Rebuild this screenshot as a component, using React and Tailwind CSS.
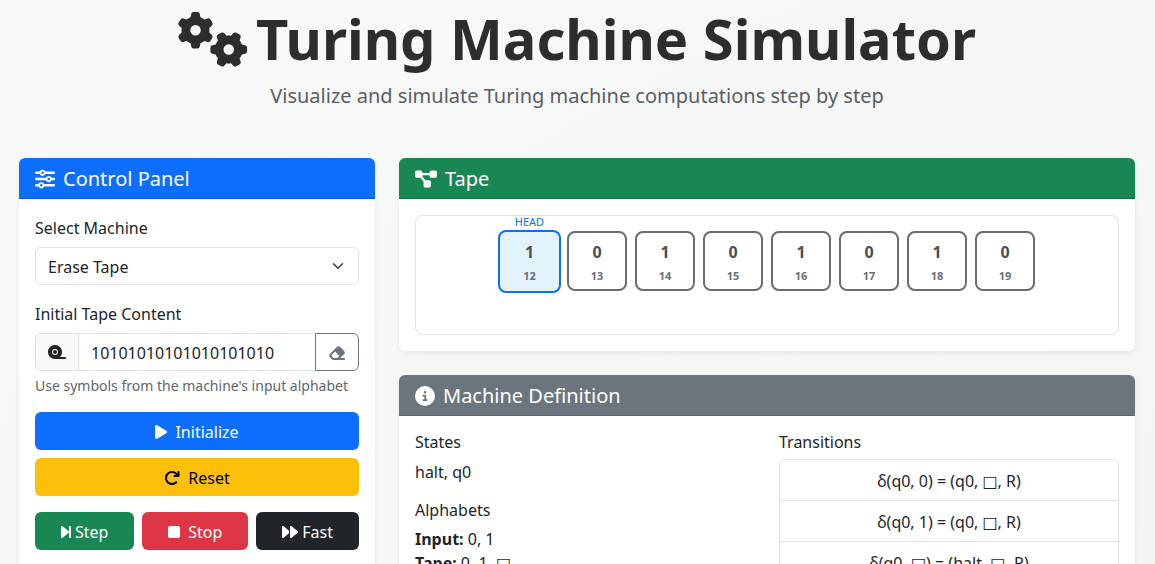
import { useState } from "react";
import {
  FaGears,
  FaSliders,
  FaTape,
  FaEraser,
  FaPlay,
  FaArrowRotateRight,
  FaForwardStep,
  FaStop,
  FaForward,
  FaDiagramProject,
  FaCircleInfo,
} from "react-icons/fa6";

const HEAD_POSITION = 12;

const CELLS = [
  { index: 12, symbol: "1" },
  { index: 13, symbol: "0" },
  { index: 14, symbol: "1" },
  { index: 15, symbol: "0" },
  { index: 16, symbol: "1" },
  { index: 17, symbol: "0" },
  { index: 18, symbol: "1" },
  { index: 19, symbol: "0" },
];

const TRANSITIONS = [
  "δ(q0, 0) = (q0, □, R)",
  "δ(q0, 1) = (q0, □, R)",
  "δ(q0, □) = (halt, □, R)",
];

function Card({ icon, title, headerClass, children }) {
  return (
    <section className="rounded-md bg-white shadow-[0_2px_4px_rgba(0,0,0,0.075)]">
      <h2
        className={`flex items-center gap-2 rounded-t-md border-b border-black/15 px-4 pt-[9px] pb-[7px] text-xl leading-6 text-white ${headerClass}`}
      >
        {icon}
        {title}
      </h2>
      <div className="p-4">{children}</div>
    </section>
  );
}

function Button({ className, children }) {
  return (
    <button
      type="button"
      className={`flex items-center justify-center rounded-md px-3 pt-2 pb-1.5 leading-6 ${className}`}
    >
      {children}
    </button>
  );
}

function TapeCell({ symbol, index, active }) {
  return (
    <div
      className={`relative flex shrink-0 flex-col items-center justify-center rounded-lg border-2 font-bold ${
        active
          ? "-mt-px -mr-0.5 -ml-px size-[63px] border-[#0d6efd] bg-[#e3f3fc]"
          : "size-15 border-[#6c6c6c] bg-white pt-0.5"
      }`}
    >
      {active && (
        <span className="absolute -top-[18px] text-[11px] leading-4 font-normal text-[#0d6efd]">
          HEAD
        </span>
      )}
      <span className="leading-6 text-[#4c5054]">{symbol}</span>
      <span className="pt-1 text-[11px] leading-4 text-[#6c6f72]">{index}</span>
    </div>
  );
}

function ControlPanel() {
  const [machine, setMachine] = useState("erase");
  const [input, setInput] = useState("10101010101010101010");

  return (
    <Card
      title="Control Panel"
      headerClass="bg-[#0d6efd]"
      icon={<FaSliders className="size-5" />}
    >
      <label htmlFor="machine" className="mb-1.5 block leading-[26px]">
        Select Machine
      </label>
      <div className="relative mb-4">
        <select
          id="machine"
          value={machine}
          onChange={(e) => setMachine(e.target.value)}
          className="block h-[38px] w-full appearance-none rounded-md border border-[#dee2e6] bg-white pt-0.5 pr-9 pl-3"
        >
          <option value="erase">Erase Tape</option>
        </select>
        <svg
          viewBox="0 0 16 16"
          className="pointer-events-none absolute top-[13px] right-[15px] size-3 fill-none stroke-[#343a40] stroke-2"
          strokeLinecap="round"
          strokeLinejoin="round"
        >
          <path d="m2 5 6 6 6-6" />
        </svg>
      </div>

      <label htmlFor="tape" className="mb-1.5 block leading-[26px]">
        Initial Tape Content
      </label>
      <div className="flex h-[38px]">
        <span className="flex items-center rounded-l-md border border-[#dee2e6] bg-[#f8f9fa] px-3">
          <FaTape className="h-4 w-[18px]" />
        </span>
        <input
          id="tape"
          type="text"
          value={input}
          onChange={(e) => setInput(e.target.value)}
          className="w-0 min-w-0 grow border-y border-[#dee2e6] bg-white px-3 pt-0.5"
        />
        <button
          type="button"
          aria-label="Clear"
          onClick={() => setInput("")}
          className="flex items-center rounded-r-md border border-[#6c757d] px-3 pt-0.5 text-[#6c757d]"
        >
          <FaEraser className="h-4 w-[18px]" />
        </button>
      </div>
      <p className="mt-1 mb-4 text-sm leading-[21px] text-[#5f666c]">
        Use symbols from the machine's input alphabet
      </p>

      <div className="mb-4 grid gap-2">
        <Button className="gap-2 bg-[#0d6efd] text-white">
          <FaPlay className="h-4 w-3" />
          Initialize
        </Button>
        <Button className="gap-2 bg-[#fdc00a] text-black">
          <FaArrowRotateRight className="size-4" />
          Reset
        </Button>
      </div>
      <div className="mb-4 flex gap-2">
        <Button className="grow gap-1 bg-[#198754] text-white">
          <FaForwardStep className="h-4 w-2.5" />
          Step
        </Button>
        <Button className="grow gap-2 bg-[#dc3545] text-white">
          <FaStop className="h-4 w-3" />
          Stop
        </Button>
        <Button className="grow gap-1 bg-[#212529] text-white">
          <FaForward className="size-4" />
          Fast
        </Button>
      </div>
    </Card>
  );
}

export default function App() {
  return (
    <main className="min-h-screen bg-linear-to-br from-[#f8f9f9] to-[#f3f5f4] pt-[5px] pr-px pb-6 font-['Noto_Sans','DejaVu_Sans',sans-serif] text-base leading-6 text-[#212529]">
      <div className="mx-auto max-w-[1140px] px-3">
        <header className="mb-[46px] text-center">
          <h1 className="mb-2 flex items-center justify-center gap-2 text-[56px] leading-[67px] font-bold text-[#2d2d2d]">
            <FaGears className="h-14 w-[70px]" />
            Turing Machine Simulator
          </h1>
          <p className="text-xl leading-8 text-[#5a5e62]">
            Visualize and simulate Turing machine computations step by step
          </p>
        </header>

        <div className="grid grid-cols-12 items-start gap-6">
          <div className="col-span-4">
            <ControlPanel />
          </div>

          <div className="col-span-8 grid gap-6">
            <Card
              title="Tape"
              headerClass="bg-[#198754]"
              icon={<FaDiagramProject className="h-5 w-[22px]" />}
            >
              <div className="flex h-30 items-start justify-center gap-2 rounded-lg border border-[#dee2e6] pt-[15px]">
                {CELLS.map((cell) => (
                  <TapeCell key={cell.index} {...cell} active={cell.index === HEAD_POSITION} />
                ))}
              </div>
            </Card>

            <Card
              title="Machine Definition"
              headerClass="bg-[#6c757d]"
              icon={<FaCircleInfo className="size-5" />}
            >
              <div className="grid grid-cols-2 gap-6">
                <div>
                  <h3 className="mb-2 leading-5">States</h3>
                  <p className="mb-4">halt, q0</p>
                  <h3 className="mb-[7px] leading-5">Alphabets</h3>
                  <p>
                    <strong>Input:</strong> 0, 1
                  </p>
                  <p>
                    <strong>Tape:</strong> 0, 1, □
                  </p>
                </div>
                <div>
                  <h3 className="mb-[7px] leading-5">Transitions</h3>
                  <ul className="divide-y divide-[#dee2e6] rounded-md border border-[#dee2e6] text-center">
                    {TRANSITIONS.map((rule) => (
                      <li key={rule} className="px-4 pt-[9px] pb-[7px]">
                        {rule}
                      </li>
                    ))}
                  </ul>
                </div>
              </div>
            </Card>
          </div>
        </div>
      </div>
    </main>
  );
}
